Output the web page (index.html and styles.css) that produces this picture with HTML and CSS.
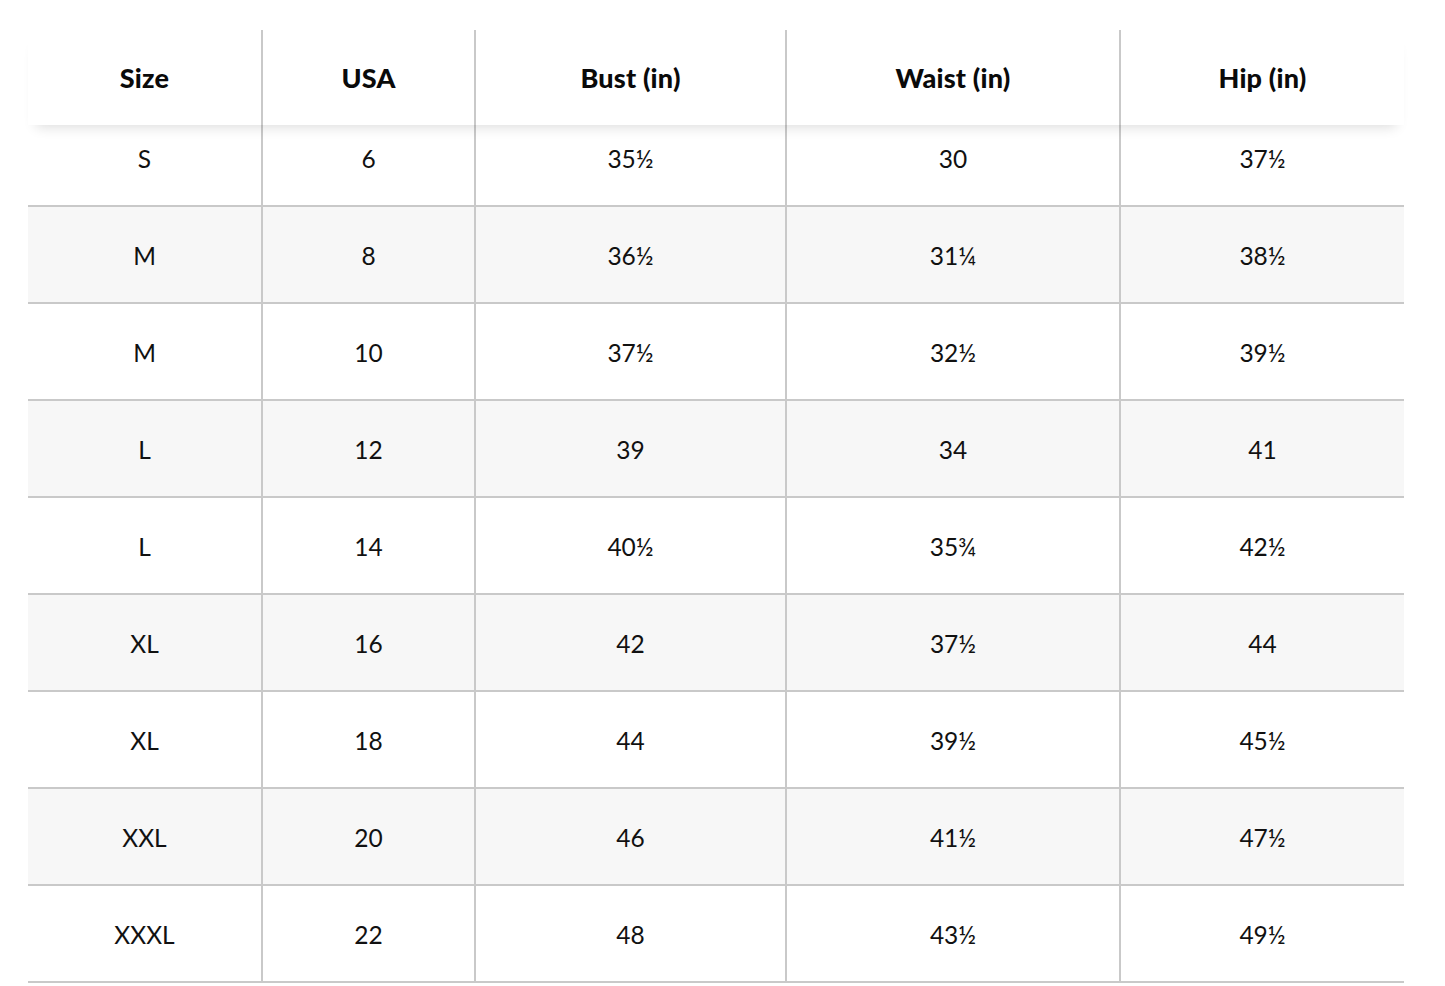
FILE: index.html
```html
<!DOCTYPE html>
<html lang="en">
<head>
<meta charset="utf-8">
<title>Size chart</title>
<link rel="stylesheet" href="styles.css">
</head>
<body>
<div class="chart">
  <div class="head">
    <div class="cell">Size</div>
    <div class="cell">USA</div>
    <div class="cell">Bust (in)</div>
    <div class="cell">Waist (in)</div>
    <div class="cell">Hip (in)</div>
  </div>
  <div class="body">
    <div class="row first"><div class="cell">S</div><div class="cell">6</div><div class="cell">35½</div><div class="cell">30</div><div class="cell">37½</div></div>
    <div class="row alt"><div class="cell">M</div><div class="cell">8</div><div class="cell">36½</div><div class="cell">31¼</div><div class="cell">38½</div></div>
    <div class="row"><div class="cell">M</div><div class="cell">10</div><div class="cell">37½</div><div class="cell">32½</div><div class="cell">39½</div></div>
    <div class="row alt"><div class="cell">L</div><div class="cell">12</div><div class="cell">39</div><div class="cell">34</div><div class="cell">41</div></div>
    <div class="row"><div class="cell">L</div><div class="cell">14</div><div class="cell">40½</div><div class="cell">35¾</div><div class="cell">42½</div></div>
    <div class="row alt"><div class="cell">XL</div><div class="cell">16</div><div class="cell">42</div><div class="cell">37½</div><div class="cell">44</div></div>
    <div class="row"><div class="cell">XL</div><div class="cell">18</div><div class="cell">44</div><div class="cell">39½</div><div class="cell">45½</div></div>
    <div class="row alt"><div class="cell">XXL</div><div class="cell">20</div><div class="cell">46</div><div class="cell">41½</div><div class="cell">47½</div></div>
    <div class="row"><div class="cell">XXXL</div><div class="cell">22</div><div class="cell">48</div><div class="cell">43½</div><div class="cell">49½</div></div>
  </div>
</div>
</body>
</html>
```

FILE: styles.css
```css
html, body {
  margin: 0;
  padding: 0;
  background: #ffffff;
}

body {
  font-family: Lato, "Liberation Sans", sans-serif;
  color: #111111;
}

.chart {
  width: 1376px;
  margin: 30px 0 0 28px;
}

.head,
.row {
  display: grid;
  grid-template-columns: 235px 213px 311px 334px 283px;
}

.head {
  position: relative;
  z-index: 2;
  height: 95px;
  background: #ffffff;
  box-shadow: 0 10px 12px -8px rgba(0, 0, 0, 0.14);
  font-weight: 900;
  font-size: 27px;
  letter-spacing: 0.2px;
  color: #0a0a0a;
}

.body {
  margin-top: -15px;
  font-size: 24.5px;
}

.row {
  height: 95px;
  border-bottom: 2px solid #c9c9c9;
  background: #ffffff;
}

.row.alt {
  background: #f7f7f7;
}

.cell {
  display: flex;
  align-items: center;
  justify-content: center;
  border-right: 2px solid #c9c9c9;
  padding-top: 2px;
}

.head .cell {
  padding-top: 0;
}

.cell:last-child {
  border-right: none;
}
```
